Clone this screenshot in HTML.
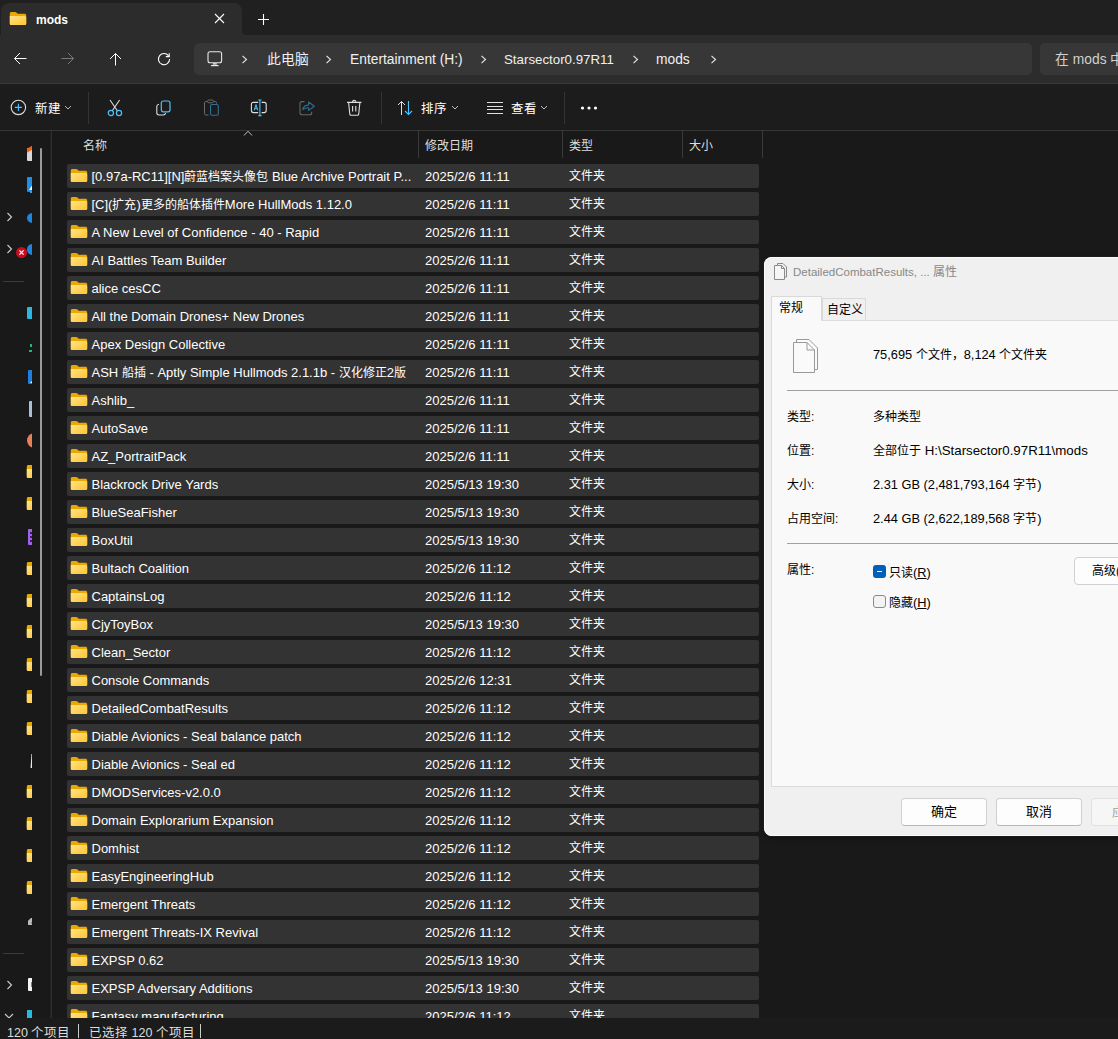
<!DOCTYPE html>
<html lang="zh-CN"><head><meta charset="utf-8">
<style>
*{box-sizing:border-box;margin:0;padding:0}
html,body{width:1118px;height:1039px;overflow:hidden}
body{position:relative;background:#191919;color:#fff;font-family:"Liberation Sans",sans-serif;font-size:13px}
i{font-style:normal}
.abs{position:absolute}
svg{display:block}
#titlebar{position:absolute;left:0;top:0;width:1118px;height:35px;background:#202020}
#tab{position:absolute;left:1px;top:3px;width:240.5px;height:32px;background:#2c2c2c;border-radius:8px 8px 0 0}
#addrrow{position:absolute;left:0;top:35px;width:1118px;height:48px;background:#2c2c2c}
#addrsep{position:absolute;left:0;top:83px;width:1118px;height:1px;background:#3a3a3a}
#toolbar{position:absolute;left:0;top:84px;width:1118px;height:46px;background:#1c1c1c}
#tbsep{position:absolute;left:0;top:130px;width:1118px;height:1px;background:#363636}
#addr{position:absolute;left:194px;top:43px;width:838px;height:32px;background:#373737;border-radius:5px}
#search{position:absolute;left:1040px;top:43px;width:100px;height:32px;background:#373737;border-radius:5px}
.bc{position:absolute;top:51px;font-size:13.8px;color:#f0f0f0;line-height:18px;white-space:nowrap}
.tb{position:absolute;top:101px;font-size:12.5px;line-height:16px;white-space:nowrap}
.vsep{position:absolute;top:92px;width:1px;height:32px;background:#333}
.row{position:absolute;left:67px;width:692px;height:24px;background:#333333;border-radius:2px}
.row .c{font-size:12px}
#status .c{font-size:12.5px}
.row span{position:absolute;top:5px;line-height:15px;white-space:nowrap;color:#fff}
.row .ic{position:absolute;left:3px;top:4px}
.nm{left:24.5px}
.dt{left:358px}
.tp{left:502px}
.hd{position:absolute;top:138.5px;font-size:12px;color:#dedede;line-height:15px}
.hsep{position:absolute;top:131px;width:1px;height:27px;background:#3a3a3a}
#status{position:absolute;left:0;top:1018px;width:1118px;height:21px;background:#1b1b1b;color:#ddd;font-size:13px}
.nf{position:absolute;left:26px;width:6px;height:15px;overflow:hidden}
.nf svg{margin-left:0.2px;margin-top:-0.5px}
.chev{position:absolute;left:6px}
/* dialog */
#dlg{position:absolute;left:764px;top:257px;width:380px;height:579px;background:#f0f0f0;border-radius:8px;box-shadow:inset 0 0 0 1px #fafafa,0 0 0 1px #1c1c1c,0 2px 6px rgba(0,0,0,.35);color:#000;overflow:hidden}
#dlg .t{position:absolute;white-space:nowrap;font-size:12.8px;line-height:16px;margin-top:1.5px}
#dlg .t .c{font-size:12px}
#dlg .t.c{font-size:12px}
#panel{position:absolute;left:7px;top:63px;width:400px;height:467px;background:#f9f9f9;border:1px solid #dcdcdc}
.dsep{position:absolute;left:23px;width:360px;height:1px;background:#a0a0a0}
.btn{position:absolute;top:541px;width:86px;height:28px;background:#fdfdfd;border:1px solid #d0d0d0;border-bottom-color:#b8b8b8;border-radius:4px;font-size:13px;line-height:26px;text-align:center}
</style></head><body>
<svg width="0" height="0" style="position:absolute">
<defs>
<linearGradient id="fg" x1="0" y1="0" x2="1" y2="1"><stop offset="0" stop-color="#ffe38a"/><stop offset="1" stop-color="#ffc52e"/></linearGradient>
<g id="fold"><path d="M0.8 2.6C0.8 1.7 1.5 1 2.4 1H6.2C6.7 1 7.1 1.2 7.4 1.5L8.8 2.8H15.6C16.5 2.8 17.2 3.5 17.2 4.4V12.4C17.2 13.3 16.5 14 15.6 14H2.4C1.5 14 0.8 13.3 0.8 12.4z" fill="#eaa800"/><path d="M0.8 4.9H15.6C16.5 4.9 17.2 5.6 17.2 6.5V12.4C17.2 13.3 16.5 14 15.6 14H2.4C1.5 14 0.8 13.3 0.8 12.4z" fill="url(#fg)"/></g>
</defs></svg>

<div id="titlebar"></div>
<div id="tab"></div>
<div class="abs" style="left:241px;top:27px;width:8px;height:8px;background:#2c2c2c"></div>
<div class="abs" style="left:241.5px;top:19px;width:16px;height:16px;background:#202020;border-bottom-left-radius:4px"></div>
<div id="addrrow"></div>
<div id="addrsep"></div>
<div id="toolbar"></div>
<div id="tbsep"></div>
<div id="addr"></div>
<div id="search"></div>

<!-- tab content -->
<div class="abs" style="left:9.2px;top:11px"><svg width="18" height="15" viewBox="0 0 18 15"><use href="#fold"/></svg></div>
<div class="abs" style="left:36px;top:12px;font-weight:bold;font-size:12px;line-height:16px">mods</div>
<svg class="abs" style="left:214px;top:13px" width="11" height="11" viewBox="0 0 11 11"><path d="M1 1L10 10M10 1L1 10" stroke="#fff" stroke-width="1.1"/></svg>
<svg class="abs" style="left:257px;top:13px" width="13" height="13" viewBox="0 0 13 13"><path d="M6.5 1V12M1 6.5H12" stroke="#fff" stroke-width="1.1"/></svg>

<!-- nav buttons -->
<svg class="abs" style="left:13px;top:52px" width="14" height="14" viewBox="0 0 14 14"><path d="M13.5 6.5H1.5M7 1L1.5 6.5L7 12" stroke="#fff" stroke-width="1" fill="none"/></svg>
<svg class="abs" style="left:61px;top:52px" width="14" height="14" viewBox="0 0 14 14"><path d="M0.5 6.5H12.5M7 1L12.5 6.5L7 12" stroke="#7a7a7a" stroke-width="1" fill="none"/></svg>
<svg class="abs" style="left:109px;top:52px" width="14" height="14" viewBox="0 0 14 14"><path d="M6.5 13.5V1.5M1 7L6.5 1.5L12 7" stroke="#fff" stroke-width="1" fill="none"/></svg>
<svg class="abs" style="left:157px;top:52px" width="14" height="14" viewBox="0 0 14 14"><path d="M11.8 4.2A5.6 5.6 0 1 0 12.6 7" stroke="#fff" stroke-width="1.1" fill="none"/><path d="M12.2 1.2V4.6H8.8" stroke="#fff" stroke-width="1.1" fill="none"/></svg>

<!-- breadcrumb -->
<svg class="abs" style="left:207px;top:51px" width="16" height="16" viewBox="0 0 16 16"><rect x="1" y="0.8" width="13.6" height="11" rx="2" stroke="#e8e8e8" stroke-width="1.1" fill="none"/><path d="M5.8 12.2H9.8V13.6H5.8z" fill="#e8e8e8"/><path d="M4 14.6H11.6" stroke="#e8e8e8" stroke-width="1.2"/></svg>
<svg class="abs" style="left:241px;top:55px" width="8" height="9" viewBox="0 0 8 9"><path d="M1.5 0.8L5.5 4.5L1.5 8.2" stroke="#e8e8e8" stroke-width="1.1" fill="none"/></svg>
<div class="bc c" style="left:267px">此电脑</div>
<svg class="abs" style="left:325px;top:55px" width="8" height="9" viewBox="0 0 8 9"><path d="M1.5 0.8L5.5 4.5L1.5 8.2" stroke="#e8e8e8" stroke-width="1.1" fill="none"/></svg>
<div class="bc" style="left:350px">Entertainment (H:)</div>
<svg class="abs" style="left:479.5px;top:55px" width="8" height="9" viewBox="0 0 8 9"><path d="M1.5 0.8L5.5 4.5L1.5 8.2" stroke="#e8e8e8" stroke-width="1.1" fill="none"/></svg>
<div class="bc" style="left:504px;font-size:13.3px">Starsector0.97R11</div>
<svg class="abs" style="left:632px;top:55px" width="8" height="9" viewBox="0 0 8 9"><path d="M1.5 0.8L5.5 4.5L1.5 8.2" stroke="#e8e8e8" stroke-width="1.1" fill="none"/></svg>
<div class="bc" style="left:656px">mods</div>
<svg class="abs" style="left:710.3px;top:55px" width="8" height="9" viewBox="0 0 8 9"><path d="M1.5 0.8L5.5 4.5L1.5 8.2" stroke="#e8e8e8" stroke-width="1.1" fill="none"/></svg>
<div class="bc" style="left:1055px;color:#d0d0d0"><i class="c">在</i> mods <i class="c">中</i></div>

<!-- toolbar -->
<svg class="abs" style="left:10px;top:99px" width="17" height="17" viewBox="0 0 17 17"><circle cx="8.4" cy="8.4" r="7.2" stroke="#ddd" stroke-width="1.1" fill="none"/><path d="M8.4 4.8V12M4.8 8.4H12" stroke="#4cc2ff" stroke-width="1.1"/></svg>
<div class="tb c" style="left:35px">新建</div>
<svg class="abs" style="left:64px;top:105px" width="8" height="5" viewBox="0 0 8 5"><path d="M1 1L4 4L7 1" stroke="#bbb" stroke-width="1" fill="none"/></svg>
<div class="vsep" style="left:88px"></div>
<svg class="abs" style="left:106px;top:99px" width="18" height="18" viewBox="0 0 18 18"><path d="M4 1L11.5 12M13.6 1L6.1 12" stroke="#ddd" stroke-width="1.1" fill="none"/><circle cx="4.9" cy="14" r="2.6" stroke="#4cc2ff" stroke-width="1.2" fill="none"/><circle cx="13" cy="14" r="2.6" stroke="#4cc2ff" stroke-width="1.2" fill="none"/></svg>
<svg class="abs" style="left:155px;top:100px" width="17" height="17" viewBox="0 0 17 17"><rect x="6.3" y="1" width="8.7" height="10.8" rx="2" stroke="#4cc2ff" stroke-width="1.2" fill="none"/><path d="M4 4.2C2.7 4.4 1.8 5.3 1.8 6.6V12.8C1.8 14.2 2.8 15 4.1 15H8.3C9.5 15 10.4 14.3 10.6 13.2" stroke="#ddd" stroke-width="1.1" fill="none"/></svg>
<svg class="abs" style="left:203px;top:99px" width="18" height="18" viewBox="0 0 18 18"><path d="M4.2 2.5H2.8C2 2.5 1.5 3 1.5 3.8V14.7C1.5 15.5 2 16 2.8 16H5.5M10.8 2.5H12.2C13 2.5 13.5 3 13.5 3.8V4.6" stroke="#6a6a6a" stroke-width="1" fill="none"/><rect x="4.5" y="1" width="6" height="2.8" rx="1.4" stroke="#6a6a6a" stroke-width="1" fill="none"/><rect x="7.5" y="5.5" width="7.8" height="10.8" rx="1.6" stroke="#2f6f94" stroke-width="1.1" fill="none"/></svg>
<svg class="abs" style="left:250px;top:99px" width="18" height="18" viewBox="0 0 18 18"><path d="M8.2 3.4H3.4C2.2 3.4 1.4 4.2 1.4 5.4V11.6C1.4 12.8 2.2 13.6 3.4 13.6H8.2M11.6 3.4H14.2C15.4 3.4 16.2 4.2 16.2 5.4V11.6C16.2 12.8 15.4 13.6 14.2 13.6H11.6" stroke="#ddd" stroke-width="1.1" fill="none"/><path d="M9.9 1V16.6M8.3 1H11.5M8.3 16.6H11.5" stroke="#4cc2ff" stroke-width="1.1"/><path d="M4.2 11.4L6 5.6L7.8 11.4M4.8 9.6H7.2" stroke="#4cc2ff" stroke-width="1" fill="none"/></svg>
<svg class="abs" style="left:299px;top:100px" width="17" height="17" viewBox="0 0 17 17"><path d="M5.5 1.6H3C1.9 1.6 1 2.5 1 3.6V12.7C1 13.8 1.9 14.7 3 14.7H10.8C11.9 14.7 12.7 13.8 12.7 12.7V11.8" stroke="#666" stroke-width="1.1" fill="none"/><path d="M3.7 9.6C4.3 6.8 6.6 5.1 9.6 5.1V2L15.3 6.2L9.6 10.4V7.8C7.4 7.6 5.4 8.3 3.7 9.6z" stroke="#2f6f94" stroke-width="1.1" fill="none" stroke-linejoin="round"/></svg>
<svg class="abs" style="left:346px;top:99px" width="17" height="18" viewBox="0 0 17 18"><path d="M1 3.4H15.4M2.6 3.4L3.8 15.2C3.9 15.9 4.4 16.3 5 16.3H11.5C12.1 16.3 12.6 15.9 12.7 15.2L13.9 3.4M6.4 3.4C6.4 2.3 7.2 1.4 8.2 1.4C9.2 1.4 10 2.3 10 3.4M6.6 6.9V12.4M9.8 6.9V12.4" stroke="#ddd" stroke-width="1.1" fill="none"/></svg>
<div class="vsep" style="left:381px"></div>
<svg class="abs" style="left:397px;top:100px" width="18" height="16" viewBox="0 0 18 16"><path d="M4.5 15V1.5M1 5L4.5 1.5L8 5" stroke="#e0e0e0" stroke-width="1" fill="none"/><path d="M11.5 1V14.5M8 11L11.5 14.5L15 11" stroke="#4cc2ff" stroke-width="1.1" fill="none"/></svg>
<div class="tb c" style="left:421px">排序</div>
<svg class="abs" style="left:451px;top:105px" width="8" height="5" viewBox="0 0 8 5"><path d="M1 1L4 4L7 1" stroke="#bbb" stroke-width="1" fill="none"/></svg>
<svg class="abs" style="left:486px;top:101px" width="18" height="14" viewBox="0 0 18 14"><path d="M1 1.5H17M1 5.5H17M1 8.5H17M1 12.5H17" stroke="#e0e0e0" stroke-width="1"/></svg>
<div class="tb c" style="left:511px">查看</div>
<svg class="abs" style="left:540px;top:105px" width="8" height="5" viewBox="0 0 8 5"><path d="M1 1L4 4L7 1" stroke="#bbb" stroke-width="1" fill="none"/></svg>
<div class="vsep" style="left:564px"></div>
<svg class="abs" style="left:580px;top:106px" width="18" height="4" viewBox="0 0 18 4"><circle cx="2.5" cy="2" r="1.6" fill="#fff"/><circle cx="9" cy="2" r="1.6" fill="#fff"/><circle cx="15.5" cy="2" r="1.6" fill="#fff"/></svg>

<!-- nav pane -->
<div class="abs" style="left:50px;top:131px;width:1px;height:887px;background:#212121"></div><div class="abs" style="left:51px;top:131px;width:1px;height:887px;background:#2e2e2e"></div>
<div class="abs" style="left:40px;top:148px;width:2px;height:528px;background:#9a9a9a;border-radius:1px"></div>
<div class="abs" style="left:3px;top:281px;width:21px;height:1px;background:#3a3a3a"></div>
<div class="abs" style="left:3px;top:953px;width:21px;height:1px;background:#3a3a3a"></div>
<div class="nf" style="top:464px"><svg width="18" height="15" viewBox="0 0 18 15"><use href="#fold"/></svg></div>
<div class="nf" style="top:496px"><svg width="18" height="15" viewBox="0 0 18 15"><use href="#fold"/></svg></div>
<div class="nf" style="top:561px"><svg width="18" height="15" viewBox="0 0 18 15"><use href="#fold"/></svg></div>
<div class="nf" style="top:593px"><svg width="18" height="15" viewBox="0 0 18 15"><use href="#fold"/></svg></div>
<div class="nf" style="top:624px"><svg width="18" height="15" viewBox="0 0 18 15"><use href="#fold"/></svg></div>
<div class="nf" style="top:657px"><svg width="18" height="15" viewBox="0 0 18 15"><use href="#fold"/></svg></div>
<div class="nf" style="top:689px"><svg width="18" height="15" viewBox="0 0 18 15"><use href="#fold"/></svg></div>
<div class="nf" style="top:721px"><svg width="18" height="15" viewBox="0 0 18 15"><use href="#fold"/></svg></div>
<div class="nf" style="top:784px"><svg width="18" height="15" viewBox="0 0 18 15"><use href="#fold"/></svg></div>
<div class="nf" style="top:816px"><svg width="18" height="15" viewBox="0 0 18 15"><use href="#fold"/></svg></div>
<div class="nf" style="top:848px"><svg width="18" height="15" viewBox="0 0 18 15"><use href="#fold"/></svg></div>
<div class="nf" style="top:880px"><svg width="18" height="15" viewBox="0 0 18 15"><use href="#fold"/></svg></div>
<svg class="chev" style="top:212px" width="8" height="10" viewBox="0 0 8 10"><path d="M1.5 1L5.5 5L1.5 9" stroke="#ccc" stroke-width="1.1" fill="none"/></svg>
<svg class="chev" style="top:244px" width="8" height="10" viewBox="0 0 8 10"><path d="M1.5 1L5.5 5L1.5 9" stroke="#ccc" stroke-width="1.1" fill="none"/></svg>
<svg class="chev" style="top:980px" width="8" height="10" viewBox="0 0 8 10"><path d="M1.5 1L5.5 5L1.5 9" stroke="#ccc" stroke-width="1.1" fill="none"/></svg>
<svg class="abs" style="left:4px;top:1013px" width="10" height="6" viewBox="0 0 10 6"><path d="M1 1L5 5L9 1" stroke="#ccc" stroke-width="1.1" fill="none"/></svg>
<div class="abs" style="left:16px;top:247px;width:11px;height:11px;border-radius:50%;background:#c50f1f"></div>
<svg class="abs" style="left:16px;top:247px" width="11" height="11" viewBox="0 0 11 11"><path d="M3.4 3.4L7.6 7.6M7.6 3.4L3.4 7.6" stroke="#fff" stroke-width="1.2"/></svg>
<!-- clipped nav icons -->
<div class="abs" style="left:0;top:131px;width:32px;height:887px;overflow:hidden">
 <div class="abs" style="left:27px;top:17px;width:8px;height:13px;background:#d8d8d8;border-radius:1px"></div>
 <div class="abs" style="left:27px;top:16px;width:6px;height:4px;background:#f7630c;transform:skewY(-30deg)"></div>
 <div class="abs" style="left:27px;top:46px;width:8px;height:15px;background:#1e90e8;border-radius:1px"></div>
 <div class="abs" style="left:29px;top:53px;width:4px;height:6px;background:#fff;clip-path:polygon(100% 0,100% 100%,0 100%)"></div>
 <div class="abs" style="left:30px;top:60px;width:3px;height:2px;background:#3aa0f0"></div>
 <div class="abs" style="left:27px;top:82px;width:11px;height:10px;border-radius:50%;background:#1e86e0"></div>
 <div class="abs" style="left:27px;top:113px;width:11px;height:11px;border-radius:50%;background:#1e86e0"></div>
 <div class="abs" style="left:27px;top:176px;width:8px;height:12px;background:#2ab8e0;border-radius:1px"></div>
 <div class="abs" style="left:30px;top:213px;width:2px;height:3px;background:#22b573"></div>
 <div class="abs" style="left:29px;top:219px;width:4px;height:2px;background:#22b573"></div>
 <div class="abs" style="left:28px;top:239px;width:8px;height:14px;background:#1e7fe0;border-radius:1px"></div>
 <div class="abs" style="left:30px;top:249px;width:3px;height:3px;background:#fff;clip-path:polygon(100% 0,100% 100%,0 100%)"></div>
 <div class="abs" style="left:29px;top:270px;width:8px;height:16px;background:#a8c0dc;border-radius:1px"></div>
 <div class="abs" style="left:27px;top:302px;width:15px;height:15px;border-radius:50%;background:#e8805a"></div>
 <div class="abs" style="left:28px;top:398px;width:8px;height:16px;background:#a060f0;border-radius:1px"></div><div class="abs" style="left:29.5px;top:401px;width:2px;height:2px;background:#3a2060"></div><div class="abs" style="left:29.5px;top:405px;width:2px;height:2px;background:#3a2060"></div><div class="abs" style="left:29.5px;top:409px;width:2px;height:2px;background:#3a2060"></div>
 <div class="abs" style="left:29px;top:623px;width:4px;height:14px;background:#e8e8e8;clip-path:polygon(60% 0,100% 0,100% 100%,40% 100%)"></div>
 <div class="abs" style="left:28px;top:787px;width:6px;height:7px;background:#bbb;clip-path:polygon(50% 0,100% 0,100% 100%,0 100%,0 40%)"></div>
 <div class="abs" style="left:31px;top:791px;width:2px;height:2px;background:#3c3"></div>
 <div class="abs" style="left:28px;top:847px;width:8px;height:13px;background:#f4f4f4;border-radius:1px"></div><div class="abs" style="left:31px;top:851px;width:2px;height:5px;background:#3b8fe0"></div>
 <div class="abs" style="left:27px;top:879px;width:8px;height:10px;background:#2ab8e0"></div>
</div>

<!-- header -->
<svg class="abs" style="left:243px;top:130px" width="10" height="7" viewBox="0 0 10 7"><path d="M1 5.5L5 1.2L9 5.5" stroke="#bbb" stroke-width="1" fill="none"/></svg>
<div class="hd c" style="left:83px">名称</div>
<div class="hd c" style="left:425px">修改日期</div>
<div class="hd c" style="left:569px">类型</div>
<div class="hd c" style="left:689px">大小</div>
<div class="hsep" style="left:418px"></div>
<div class="hsep" style="left:562px"></div>
<div class="hsep" style="left:682px"></div>
<div class="hsep" style="left:762px"></div>

<div class="abs" style="left:52px;top:131px;width:1066px;height:887px;overflow:hidden">
<div class="abs" style="left:-52px;top:-131px;width:1118px;height:1039px">
<div class="row" style="top:164px"><svg class="ic" width="18" height="15" viewBox="0 0 18 15"><use href="#fold"/></svg><span class="nm">[0.97a-RC11][N]<i class="c">蔚蓝档案头像包</i> Blue Archive Portrait P...</span><span class="dt">2025/2/6 11:11</span><span class="tp c">文件夹</span></div>
<div class="row" style="top:192px"><svg class="ic" width="18" height="15" viewBox="0 0 18 15"><use href="#fold"/></svg><span class="nm">[C](<i class="c">扩充</i>)<i class="c">更多的船体插件</i>More HullMods 1.12.0</span><span class="dt">2025/2/6 11:11</span><span class="tp c">文件夹</span></div>
<div class="row" style="top:220px"><svg class="ic" width="18" height="15" viewBox="0 0 18 15"><use href="#fold"/></svg><span class="nm">A New Level of Confidence - 40 - Rapid</span><span class="dt">2025/2/6 11:11</span><span class="tp c">文件夹</span></div>
<div class="row" style="top:248px"><svg class="ic" width="18" height="15" viewBox="0 0 18 15"><use href="#fold"/></svg><span class="nm">AI Battles Team Builder</span><span class="dt">2025/2/6 11:11</span><span class="tp c">文件夹</span></div>
<div class="row" style="top:276px"><svg class="ic" width="18" height="15" viewBox="0 0 18 15"><use href="#fold"/></svg><span class="nm">alice cesCC</span><span class="dt">2025/2/6 11:11</span><span class="tp c">文件夹</span></div>
<div class="row" style="top:304px"><svg class="ic" width="18" height="15" viewBox="0 0 18 15"><use href="#fold"/></svg><span class="nm">All the Domain Drones+ New Drones</span><span class="dt">2025/2/6 11:11</span><span class="tp c">文件夹</span></div>
<div class="row" style="top:332px"><svg class="ic" width="18" height="15" viewBox="0 0 18 15"><use href="#fold"/></svg><span class="nm">Apex Design Collective</span><span class="dt">2025/2/6 11:11</span><span class="tp c">文件夹</span></div>
<div class="row" style="top:360px"><svg class="ic" width="18" height="15" viewBox="0 0 18 15"><use href="#fold"/></svg><span class="nm">ASH <i class="c">船插</i> - Aptly Simple Hullmods 2.1.1b - <i class="c">汉化修正</i>2<i class="c">版</i></span><span class="dt">2025/2/6 11:11</span><span class="tp c">文件夹</span></div>
<div class="row" style="top:388px"><svg class="ic" width="18" height="15" viewBox="0 0 18 15"><use href="#fold"/></svg><span class="nm">Ashlib_</span><span class="dt">2025/2/6 11:11</span><span class="tp c">文件夹</span></div>
<div class="row" style="top:416px"><svg class="ic" width="18" height="15" viewBox="0 0 18 15"><use href="#fold"/></svg><span class="nm">AutoSave</span><span class="dt">2025/2/6 11:11</span><span class="tp c">文件夹</span></div>
<div class="row" style="top:444px"><svg class="ic" width="18" height="15" viewBox="0 0 18 15"><use href="#fold"/></svg><span class="nm">AZ_PortraitPack</span><span class="dt">2025/2/6 11:11</span><span class="tp c">文件夹</span></div>
<div class="row" style="top:472px"><svg class="ic" width="18" height="15" viewBox="0 0 18 15"><use href="#fold"/></svg><span class="nm">Blackrock Drive Yards</span><span class="dt">2025/5/13 19:30</span><span class="tp c">文件夹</span></div>
<div class="row" style="top:500px"><svg class="ic" width="18" height="15" viewBox="0 0 18 15"><use href="#fold"/></svg><span class="nm">BlueSeaFisher</span><span class="dt">2025/5/13 19:30</span><span class="tp c">文件夹</span></div>
<div class="row" style="top:528px"><svg class="ic" width="18" height="15" viewBox="0 0 18 15"><use href="#fold"/></svg><span class="nm">BoxUtil</span><span class="dt">2025/5/13 19:30</span><span class="tp c">文件夹</span></div>
<div class="row" style="top:556px"><svg class="ic" width="18" height="15" viewBox="0 0 18 15"><use href="#fold"/></svg><span class="nm">Bultach Coalition</span><span class="dt">2025/2/6 11:12</span><span class="tp c">文件夹</span></div>
<div class="row" style="top:584px"><svg class="ic" width="18" height="15" viewBox="0 0 18 15"><use href="#fold"/></svg><span class="nm">CaptainsLog</span><span class="dt">2025/2/6 11:12</span><span class="tp c">文件夹</span></div>
<div class="row" style="top:612px"><svg class="ic" width="18" height="15" viewBox="0 0 18 15"><use href="#fold"/></svg><span class="nm">CjyToyBox</span><span class="dt">2025/5/13 19:30</span><span class="tp c">文件夹</span></div>
<div class="row" style="top:640px"><svg class="ic" width="18" height="15" viewBox="0 0 18 15"><use href="#fold"/></svg><span class="nm">Clean_Sector</span><span class="dt">2025/2/6 11:12</span><span class="tp c">文件夹</span></div>
<div class="row" style="top:668px"><svg class="ic" width="18" height="15" viewBox="0 0 18 15"><use href="#fold"/></svg><span class="nm">Console Commands</span><span class="dt">2025/2/6 12:31</span><span class="tp c">文件夹</span></div>
<div class="row" style="top:696px"><svg class="ic" width="18" height="15" viewBox="0 0 18 15"><use href="#fold"/></svg><span class="nm">DetailedCombatResults</span><span class="dt">2025/2/6 11:12</span><span class="tp c">文件夹</span></div>
<div class="row" style="top:724px"><svg class="ic" width="18" height="15" viewBox="0 0 18 15"><use href="#fold"/></svg><span class="nm">Diable Avionics - Seal balance patch</span><span class="dt">2025/2/6 11:12</span><span class="tp c">文件夹</span></div>
<div class="row" style="top:752px"><svg class="ic" width="18" height="15" viewBox="0 0 18 15"><use href="#fold"/></svg><span class="nm">Diable Avionics - Seal ed</span><span class="dt">2025/2/6 11:12</span><span class="tp c">文件夹</span></div>
<div class="row" style="top:780px"><svg class="ic" width="18" height="15" viewBox="0 0 18 15"><use href="#fold"/></svg><span class="nm">DMODServices-v2.0.0</span><span class="dt">2025/2/6 11:12</span><span class="tp c">文件夹</span></div>
<div class="row" style="top:808px"><svg class="ic" width="18" height="15" viewBox="0 0 18 15"><use href="#fold"/></svg><span class="nm">Domain Explorarium Expansion</span><span class="dt">2025/2/6 11:12</span><span class="tp c">文件夹</span></div>
<div class="row" style="top:836px"><svg class="ic" width="18" height="15" viewBox="0 0 18 15"><use href="#fold"/></svg><span class="nm">Domhist</span><span class="dt">2025/2/6 11:12</span><span class="tp c">文件夹</span></div>
<div class="row" style="top:864px"><svg class="ic" width="18" height="15" viewBox="0 0 18 15"><use href="#fold"/></svg><span class="nm">EasyEngineeringHub</span><span class="dt">2025/2/6 11:12</span><span class="tp c">文件夹</span></div>
<div class="row" style="top:892px"><svg class="ic" width="18" height="15" viewBox="0 0 18 15"><use href="#fold"/></svg><span class="nm">Emergent Threats</span><span class="dt">2025/2/6 11:12</span><span class="tp c">文件夹</span></div>
<div class="row" style="top:920px"><svg class="ic" width="18" height="15" viewBox="0 0 18 15"><use href="#fold"/></svg><span class="nm">Emergent Threats-IX Revival</span><span class="dt">2025/2/6 11:12</span><span class="tp c">文件夹</span></div>
<div class="row" style="top:948px"><svg class="ic" width="18" height="15" viewBox="0 0 18 15"><use href="#fold"/></svg><span class="nm">EXPSP 0.62</span><span class="dt">2025/5/13 19:30</span><span class="tp c">文件夹</span></div>
<div class="row" style="top:976px"><svg class="ic" width="18" height="15" viewBox="0 0 18 15"><use href="#fold"/></svg><span class="nm">EXPSP Adversary Additions</span><span class="dt">2025/5/13 19:30</span><span class="tp c">文件夹</span></div>
<div class="row" style="top:1004px"><svg class="ic" width="18" height="15" viewBox="0 0 18 15"><use href="#fold"/></svg><span class="nm">Fantasy manufacturing</span><span class="dt">2025/2/6 11:12</span><span class="tp c">文件夹</span></div>
</div></div>

<div id="status"><span class="abs c" style="left:7px;top:4px">120 个项目</span><span class="abs" style="left:78px;top:6px;width:1px;height:14px;background:#ccc"></span><span class="abs c" style="left:89px;top:4px">已选择 120 个项目</span><span class="abs" style="left:200px;top:6px;width:1px;height:14px;background:#ccc"></span></div>

<!-- dialog -->
<div id="dlg">
 <svg class="abs" style="left:10px;top:6px" width="14" height="17" viewBox="0 0 14 17"><path d="M3.5 3V0.5H9L12.5 4V14H10.5" stroke="#8a8a8a" stroke-width="1" fill="none"/><path d="M0.5 2.5H7.5L10.5 5.5V16.5H0.5z" stroke="#8a8a8a" stroke-width="1" fill="#f6f6f6"/><path d="M7.5 2.5V5.5H10.5" stroke="#8a8a8a" stroke-width="1" fill="none"/></svg>
 <div class="t" style="left:29px;top:7px;color:#888;font-size:11.5px;margin-top:0">DetailedCombatResults, ... <i class="c">属性</i></div>
 <div class="abs" style="left:58px;top:41px;width:44px;height:22px;background:#f0f0f0;border:1px solid #d9d9d9;border-bottom:none"></div>
 <div id="panel"></div>
 <div class="abs" style="left:7px;top:39px;width:51px;height:25px;background:#f9f9f9;border:1px solid #d9d9d9;border-bottom:none"></div>
 <div class="t c" style="left:15px;top:41.5px">常规</div>
 <div class="t c" style="left:63px;top:43px">自定义</div>
 <svg class="abs" style="left:28px;top:81px" width="28" height="36" viewBox="0 0 28 36"><path d="M4.5 4V1.5H17L25.5 10V31.5H22.5" stroke="#999" stroke-width="1" fill="#fafafa"/><path d="M1.5 4.5H15L22.5 12V34.5H1.5z" stroke="#999" stroke-width="1" fill="#fafafa"/><path d="M15 4.5V12H22.5" stroke="#999" stroke-width="1" fill="none"/></svg>
 <div class="t" style="left:109px;top:88px">75,695 <i class="c">个文件，</i>8,124 <i class="c">个文件夹</i></div>
 <div class="dsep" style="top:133px"></div>
 <div class="t c" style="left:23px;top:150px">类型:</div>
 <div class="t c" style="left:109px;top:150px">多种类型</div>
 <div class="t c" style="left:23px;top:184px">位置:</div>
 <div class="t" style="left:109px;top:184px;font-size:13.3px"><i class="c">全部位于</i> H:\Starsector0.97R11\mods</div>
 <div class="t c" style="left:23px;top:218px">大小:</div>
 <div class="t" style="left:109px;top:218px">2.31 GB (2,481,793,164 <i class="c">字节</i>)</div>
 <div class="t c" style="left:23px;top:252px">占用空间:</div>
 <div class="t" style="left:109px;top:252px">2.44 GB (2,622,189,568 <i class="c">字节</i>)</div>
 <div class="dsep" style="top:286px"></div>
 <div class="t c" style="left:23px;top:303px">属性:</div>
 <div class="abs" style="left:109px;top:308px;width:13px;height:13px;background:#005fb8;border-radius:3px"></div>
 <div class="abs" style="left:113px;top:314px;width:5px;height:1px;background:#fff"></div>
 <div class="t" style="left:125px;top:306px"><i class="c">只读</i>(<u>R</u>)</div>
 <div class="abs" style="left:109px;top:338px;width:13px;height:13px;background:#f3f3f3;border:1px solid #8a8a8a;border-radius:3px"></div>
 <div class="t" style="left:125px;top:336px"><i class="c">隐藏</i>(<u>H</u>)</div>
 <div class="abs" style="left:310px;top:300px;width:90px;height:28px;background:#fdfdfd;border:1px solid #d0d0d0;border-radius:4px"></div>
 <div class="t c" style="left:328px;top:304px">高级(</div>
 <div class="btn c" style="left:137px">确定</div>
 <div class="btn c" style="left:232px">取消</div>
 <div class="btn" style="left:327px;background:#f6f6f6;border-color:#e0e0e0"></div>
 <div class="t c" style="left:348px;top:546px;color:#a0a0a0">应用</div>
</div>
</body></html>
